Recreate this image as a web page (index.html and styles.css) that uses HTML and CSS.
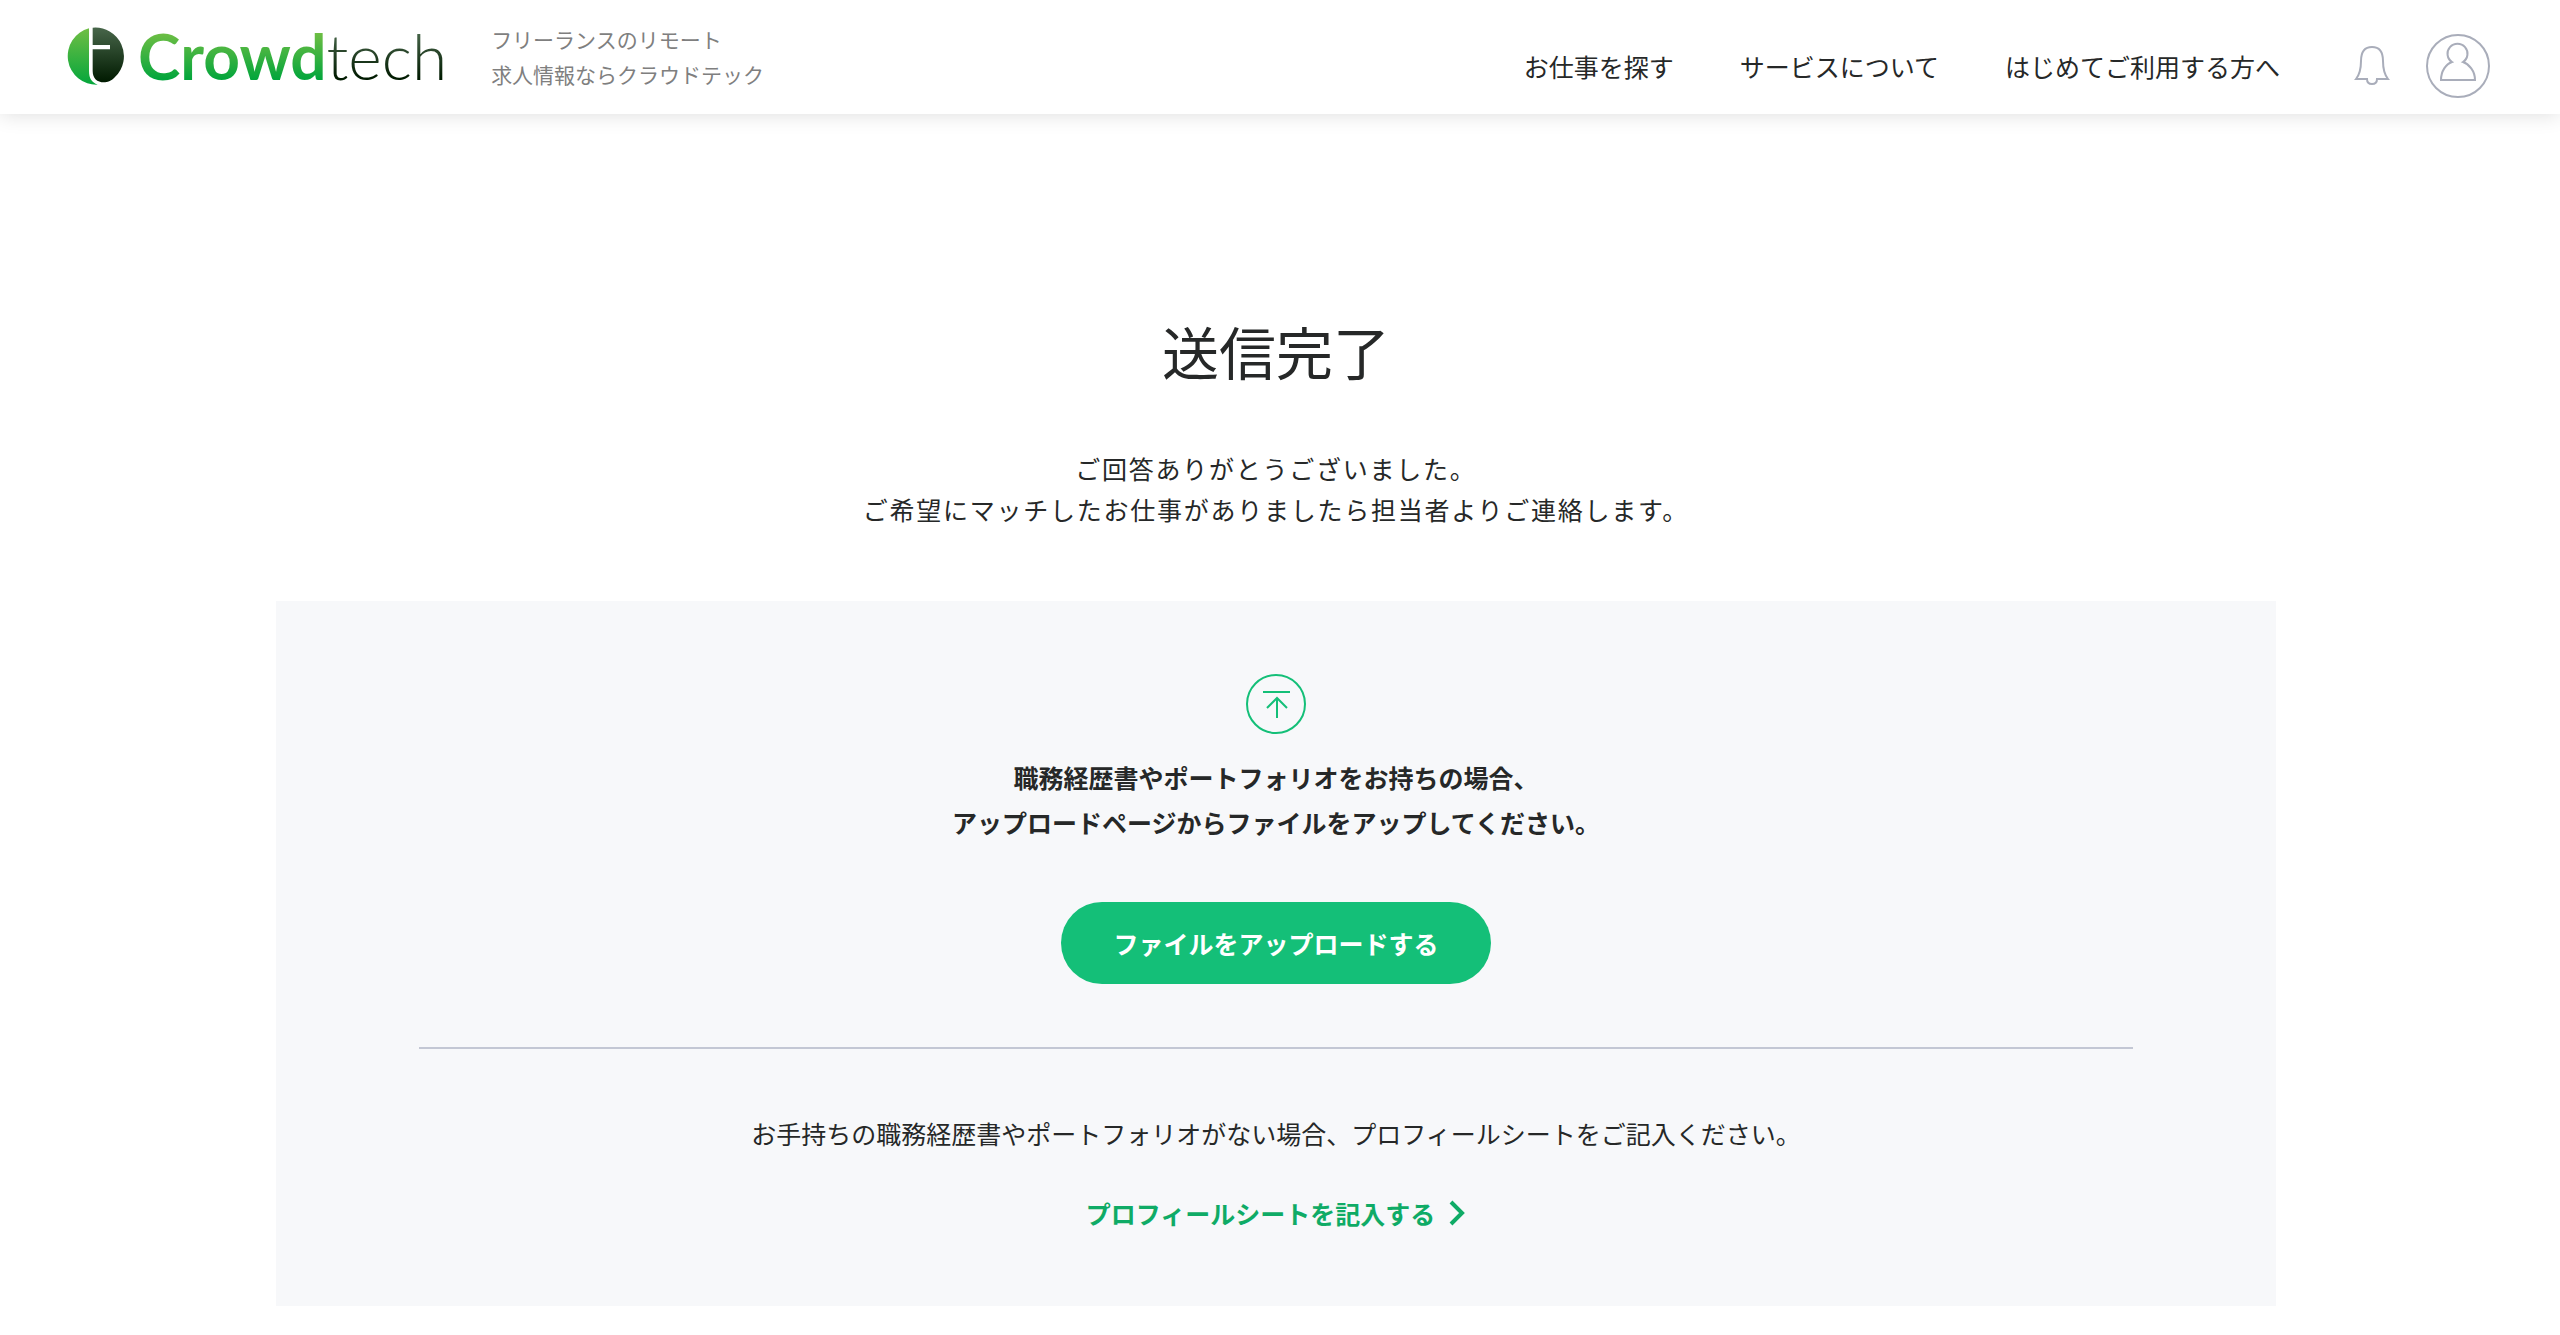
FILE: index.html
```html
<!DOCTYPE html>
<html lang="ja">
<head>
    <meta charset="UTF-8">
    <meta name="viewport" content="width=device-width, initial-scale=1">
    <title>送信完了 | Crowdtech</title>
    <link rel="stylesheet" href="styles.css">
</head>
<body>
    <header class="header">
        <a class="logo" href="#" aria-label="Crowdtech">
            <svg class="logo-mark" viewBox="0 0 174 174" aria-hidden="true">
                <defs>
                    <linearGradient id="green" x1="0" y1="0" x2="0" y2="1">
                        <stop offset="0" stop-color="#6fbe44"/>
                        <stop offset="1" stop-color="#04a63c"/>
                    </linearGradient>
                    <linearGradient id="dark" x1="0" y1="0" x2="0" y2="1">
                        <stop offset="0" stop-color="#48664a"/>
                        <stop offset="1" stop-color="#001a00"/>
                    </linearGradient>
                </defs>
                <path fill="url(#green)" d="M66 4A86 86 0 0 0 92 173C74 166 66 154 66 132Z"/>
                <path fill="url(#dark)" d="M77 2A86 86 0 0 1 144 150C132 163 121 166 111 166C90 166 77 154 77 132V67H129V54H77Z"/>
            </svg>
            <span class="logo-text"><span class="logo-crowd">Crowd</span><span class="logo-tech">tech</span></span>
        </a>
        <p class="tagline">フリーランスのリモート<br>求人情報ならクラウドテック</p>
        <nav class="nav">
            <a href="#">お仕事を探す</a>
            <a href="#">サービスについて</a>
            <a href="#">はじめてご利用する方へ</a>
        </nav>
        <button class="icon-button bell" type="button" aria-label="お知らせ">
            <svg viewBox="0 0 36 40" width="36" height="40">
                <path d="M2 33C6 28 7 23 7 15C7 6 11 1 18 1S29 6 29 15C29 23 30 28 34 33H23C23 36 21 38 18 38S13 36 13 33Z"/>
            </svg>
        </button>
        <button class="icon-button" type="button" aria-label="マイページ">
            <svg viewBox="0 0 64 64" width="64" height="64">
                <circle cx="32" cy="32" r="31"/>
                <path d="M26 28A10 10 0 1 1 37 28C43 30 49 37 49 46H15C15 37 20 30 26 28Z"/>
            </svg>
        </button>
    </header>

    <main class="main">
        <h1 class="title">送信完了</h1>
        <p class="lead">ご回答ありがとうございました。<br>ご希望にマッチしたお仕事がありましたら担当者よりご連絡します。</p>

        <section class="panel">
            <svg class="upload-icon" viewBox="0 0 60 60" aria-hidden="true">
                <circle cx="30" cy="30" r="29"/>
                <path d="M17 18H44M31 44V25M21 34L31 24L41 34"/>
            </svg>
            <p class="panel-heading">職務経歴書やポートフォリオをお持ちの場合、<br>アップロードページからファイルをアップしてください。</p>
            <button class="upload-button" type="button">ファイルをアップロードする</button>
            <hr class="divider">
            <p class="panel-text">お手持ちの職務経歴書やポートフォリオがない場合、プロフィールシートをご記入ください。</p>
            <a class="profile-link" href="#">プロフィールシートを記入する
                <svg viewBox="0 0 18 26" width="18" height="26" aria-hidden="true">
                    <path d="M3 2L14 13L3 24"/>
                </svg>
            </a>
        </section>
    </main>
</body>
</html>
```
FILE: styles.css
```css
* {
    box-sizing: border-box;
}

body {
    margin: 0;
    background-color: #fff;
    color: #262828;
    font-family: "Noto Sans CJK JP", sans-serif;
    font-size: 25px;
}

h1, p {
    margin: 0;
}

a {
    color: inherit;
    text-decoration: none;
}

button {
    border: none;
    font-family: inherit;
    cursor: pointer;
}

/* ヘッダー */
.header {
    display: flex;
    align-items: center;
    height: 114px;
    padding: 0 70px 0 67px;
    box-shadow: 0 0 20px rgba(0, 0, 0, 0.14);
}

.logo {
    display: flex;
    align-items: center;
    gap: 13px;
    padding-bottom: 2px;
}

.logo-mark {
    width: 58px;
    height: 58px;
}

.logo-text {
    font-family: Lato, sans-serif;
    font-size: 64px;
    line-height: 80px;
}

.logo-crowd,
.logo-tech {
    background-clip: text;
    -webkit-background-clip: text;
    color: transparent;
}

.logo-crowd {
    font-weight: 700;
    background-image: linear-gradient(#6fbe44 20%, #04a63c 80%);
}

.logo-tech {
    font-weight: 300;
    background-image: linear-gradient(#48664a 20%, #001a00 80%);
}

.tagline {
    margin-left: 44px;
    color: #7f7f7f;
    font-size: 21px;
    line-height: 35px;
}

.nav {
    display: flex;
    gap: 66px;
    margin-left: auto;
    padding-top: 18px;
}

.icon-button {
    display: flex;
    margin-top: 18px;
    padding: 0;
    background: none;
}

.icon-button svg {
    fill: none;
    stroke: #a9adba;
    stroke-width: 2;
}

.bell {
    margin-left: 74px;
    margin-right: 36px;
}

/* 送信完了 */
.main {
    padding: 194px 284px 29px 276px;
    text-align: center;
}

.title {
    font-size: 57px;
    font-weight: 400;
    line-height: 84px;
}

.lead {
    margin-top: 56px;
    line-height: 41px;
    letter-spacing: 0.07em;
}

.panel {
    display: flex;
    flex-direction: column;
    align-items: center;
    margin-top: 71px;
    padding: 73px 143px;
    background-color: #f7f8fa;
}

.upload-icon {
    width: 60px;
    height: 60px;
    fill: none;
    stroke: #14bf78;
    stroke-width: 2;
}

.panel-heading {
    margin-top: 21px;
    font-weight: 700;
    line-height: 45px;
}

.upload-button {
    height: 82px;
    margin-top: 57px;
    padding: 0 52px;
    border-radius: 41px;
    background-color: #14bf78;
    color: #fff;
    font-size: 25px;
    font-weight: 700;
}

.divider {
    width: 100%;
    height: 2px;
    margin: 63px 0 64px;
    border: none;
    background-color: #c3c7d4;
}

.panel-text {
    line-height: 40px;
}

.profile-link {
    display: flex;
    align-items: center;
    gap: 13px;
    margin-top: 40px;
    color: #0fab66;
    font-weight: 700;
    line-height: 40px;
}

.profile-link svg {
    fill: none;
    stroke: currentColor;
    stroke-width: 4;
}
```
